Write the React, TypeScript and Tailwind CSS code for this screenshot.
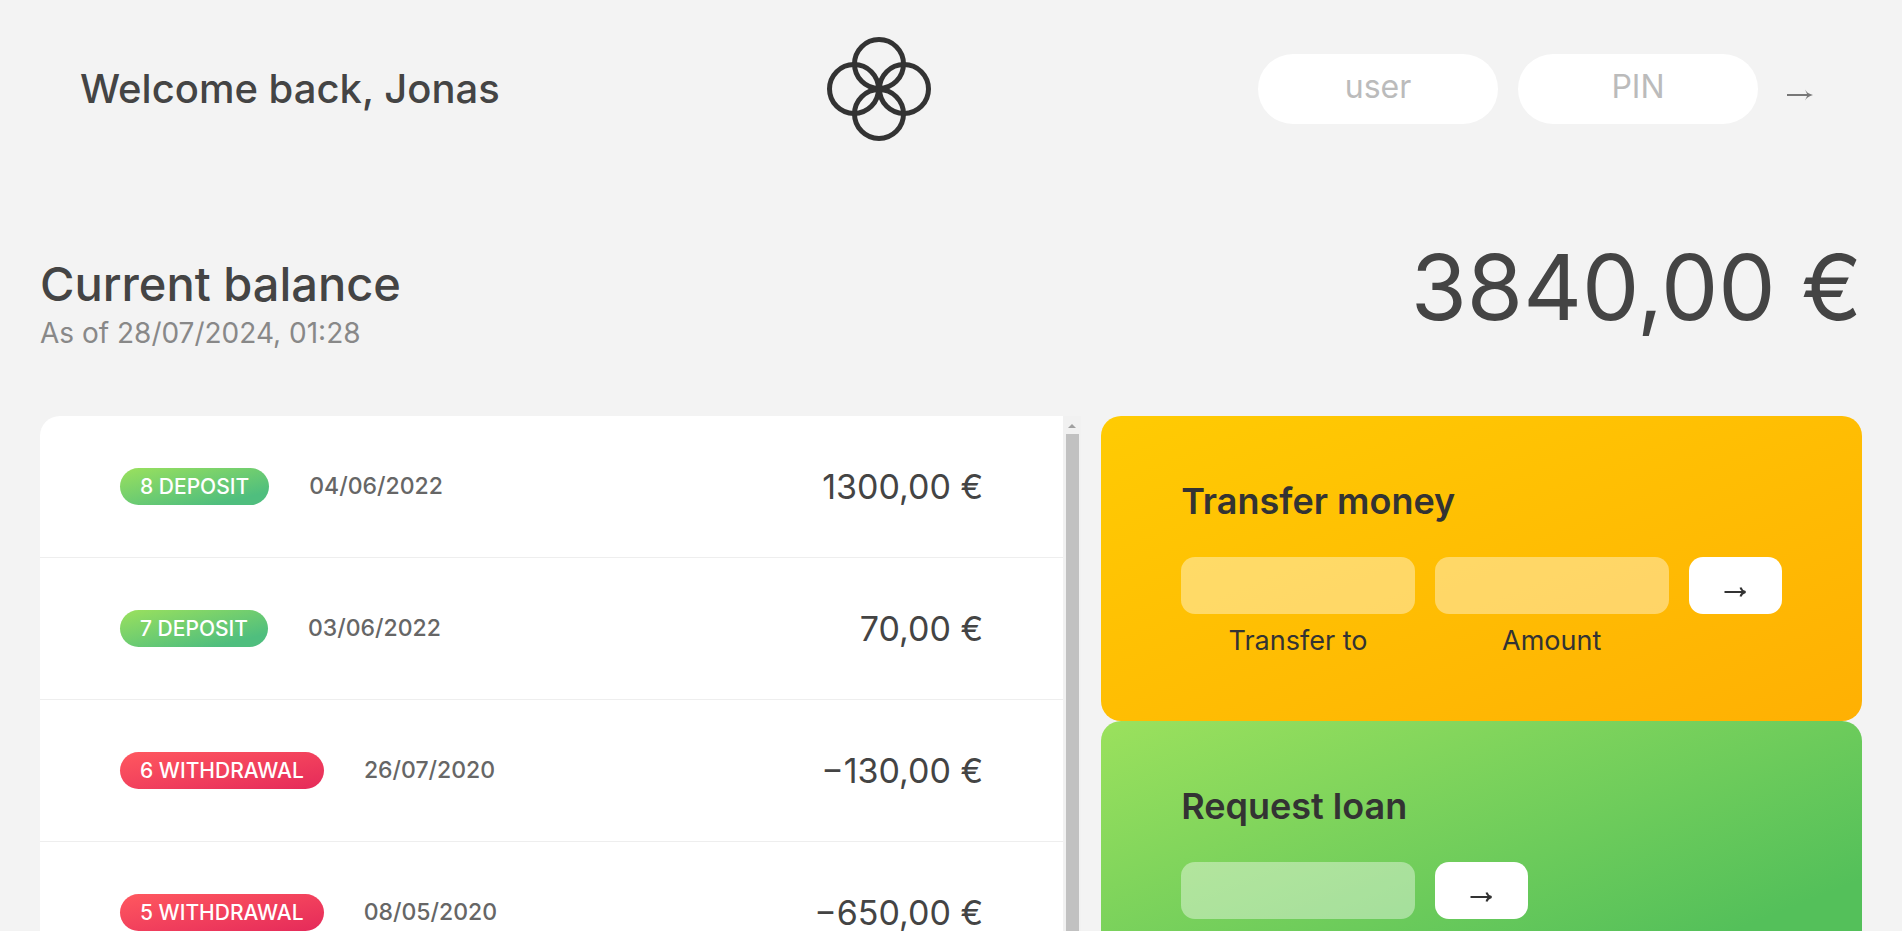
import React from "react";

type MovementKind = "deposit" | "withdrawal";

interface Movement {
  id: number;
  kind: MovementKind;
  date: string;
  value: string;
}

const movements: Movement[] = [
  { id: 8, kind: "deposit", date: "04/06/2022", value: "1300,00 €" },
  { id: 7, kind: "deposit", date: "03/06/2022", value: "70,00 €" },
  { id: 6, kind: "withdrawal", date: "26/07/2020", value: "−130,00 €" },
  { id: 5, kind: "withdrawal", date: "08/05/2020", value: "−650,00 €" },
];

const badgeStyles: Record<MovementKind, string> = {
  deposit: "bg-[linear-gradient(to_top_left,#4fbe7e_18%,#9be15d)]",
  withdrawal: "bg-[linear-gradient(to_top_left,#e52a5a,#ff585f)]",
};

function Logo() {
  return (
    <svg viewBox="0 0 106 106" className="size-[106px] shrink-0" role="img" aria-label="Bankist">
      <g fill="none" stroke="#333" strokeWidth="5">
        <circle cx="53" cy="28" r="24.5" />
        <circle cx="53" cy="78" r="24.5" />
        <circle cx="28" cy="53" r="24.5" />
        <circle cx="78" cy="53" r="24.5" />
      </g>
    </svg>
  );
}

function LoginArrow() {
  return (
    <svg viewBox="0 0 28 16" className="h-4 w-7" aria-hidden="true">
      <path d="M1 8H23" fill="none" stroke="currentColor" strokeWidth="2" />
      <path d="M19 2.5Q21 6.5 27 8Q21 9.5 19 13.5L21.5 8Z" fill="currentColor" />
    </svg>
  );
}

function SubmitArrow() {
  return (
    <svg viewBox="0 0 24 14" className="h-3.5 w-6" aria-hidden="true">
      <g fill="none" stroke="currentColor" strokeWidth="2">
        <path d="M1.5 7H22" />
        <path d="M17.5 2.5Q18.5 6 22.5 7Q18.5 8 17.5 11.5" />
      </g>
    </svg>
  );
}

function Nav() {
  const field =
    "h-[70px] w-60 rounded-full bg-white px-5 pb-1 text-center text-[32px] text-[#444] outline-none placeholder:text-[#bbb]";
  return (
    <nav className="flex h-[177px] shrink-0 items-center justify-between px-20">
      <p className="text-[40px] font-medium">Welcome back, Jonas</p>
      <Logo />
      <form className="flex items-center gap-5" onSubmit={(e) => e.preventDefault()}>
        <input type="text" placeholder="user" aria-label="User" className={field} />
        <input type="text" placeholder="PIN" maxLength={4} aria-label="PIN" className={field} />
        <button type="submit" aria-label="Log in" className="flex h-[70px] items-center px-2 pt-3 text-[#777]">
          <LoginArrow />
        </button>
      </form>
    </nav>
  );
}

function MovementRow({ movement }: { movement: Movement }) {
  return (
    <li className="flex h-[142px] items-center gap-10 border-b border-[#eee] px-20">
      <span
        className={`rounded-full px-5 py-0.5 text-[21px] leading-[33px] font-medium whitespace-nowrap text-white uppercase ${badgeStyles[movement.kind]}`}
      >
        {movement.id} {movement.kind}
      </span>
      <span className="text-[23px] font-medium text-[#666]">{movement.date}</span>
      <span className="ml-auto text-[34px] whitespace-nowrap">{movement.value}</span>
    </li>
  );
}

function Movements() {
  return (
    <section aria-label="Movements" className="flex min-h-0 overflow-hidden rounded-l-[20px]">
      <ul className="grow bg-white">
        {movements.map((m) => (
          <MovementRow key={m.id} movement={m} />
        ))}
      </ul>
      <div aria-hidden="true" className="flex w-[18px] shrink-0 flex-col items-center bg-[#f1f1f1]">
        <div className="flex h-[18px] items-center pt-0.5">
          <svg viewBox="0 0 8 4" className="h-1 w-2">
            <path d="M4 0L8 4H0Z" fill="#a0a0a0" />
          </svg>
        </div>
        <div className="w-[13px] grow bg-[#c1c1c1]" />
      </div>
    </section>
  );
}

interface OperationProps {
  title: string;
  tone: string;
  fields: { id: string; label: string }[];
}

function Operation({ title, tone, fields }: OperationProps) {
  return (
    <section className={`h-[305px] rounded-[20px] px-20 pt-15 text-[#333] ${tone}`}>
      <h2 className="mb-[30px] text-[36px] leading-[51px] font-semibold">{title}</h2>
      <form
        className="grid grid-cols-[5fr_5fr_2fr] gap-x-5"
        onSubmit={(e) => e.preventDefault()}
      >
        {fields.map((f) => (
          <div key={f.id} className="flex flex-col gap-[7px]">
            <input
              id={f.id}
              type="text"
              className="h-[57px] w-full rounded-[14px] bg-white/40 px-3 text-center text-[30px] outline-none"
            />
            <label htmlFor={f.id} className="text-center text-[27px] leading-[39px]">
              {f.label}
            </label>
          </div>
        ))}
        <div className={fields.length === 1 ? "w-[93px]" : ""}>
          <button
            type="submit"
            aria-label={title}
            className="flex h-[57px] w-full items-center justify-center rounded-[14px] bg-white pt-3"
          >
            <SubmitArrow />
          </button>
        </div>
      </form>
    </section>
  );
}

export default function App() {
  return (
    <div className="flex h-screen flex-col overflow-hidden bg-[#f3f3f3] font-['Inter',sans-serif] text-[#444]">
      <Nav />
      <main className="flex grow flex-col px-10 pt-[62px]">
        <div className="flex h-[177px] shrink-0 items-start justify-between">
          <div className="pt-3">
            <h1 className="text-[47px] leading-[66px] font-medium">Current balance</h1>
            <p className="text-[28px] leading-8 text-[#888]">As of 28/07/2024, 01:28</p>
          </div>
          <p className="text-[91px] leading-[96px]">3840,00 €</p>
        </div>
        <div className="grid grow grid-cols-[26fr_19fr] gap-5">
          <Movements />
          <div>
            <Operation
              title="Transfer money"
              tone="bg-[linear-gradient(to_top_left,#ffb003,#ffcb03)]"
              fields={[
                { id: "transfer-to", label: "Transfer to" },
                { id: "transfer-amount", label: "Amount" },
              ]}
            />
            <Operation
              title="Request loan"
              tone="bg-[linear-gradient(to_top_left,#54c05a_24%,#9be15d)]"
              fields={[{ id: "loan-amount", label: "Amount" }]}
            />
          </div>
        </div>
      </main>
    </div>
  );
}
